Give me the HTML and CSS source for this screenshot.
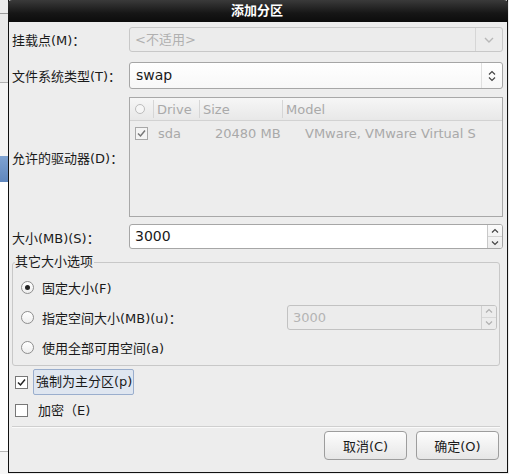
FILE: index.html
```html
<!DOCTYPE html>
<html lang="zh-CN">
<head>
<meta charset="utf-8">
<title>添加分区</title>
<link rel="stylesheet" href="styles.css">
</head>
<body>
<div class="screen">
  <div class="strip">
    <div class="strip-top"></div>
    <div class="strip-box"></div>
    <div class="strip-sel"></div>
    <div class="strip-fill"></div>
    <div class="strip-line"></div>
    <div class="strip-rest"></div>
  </div>
  <div class="dialog">
    <div class="titlebar">添加分区</div>
    <div class="body">
      <div class="form">
        <div class="lbl">挂载点(M)：</div>
        <div class="combo combo-disabled">
          <span class="combo-text">&lt;不适用&gt;</span>
          <span class="combo-btn">
            <svg width="12" height="8" viewBox="0 0 12 8"><path d="M2 2 L6 6 L10 2" fill="none" stroke="#b8b8b8" stroke-width="1.4"/></svg>
          </span>
        </div>

        <div class="lbl">文件系统类型(T)：</div>
        <div class="combo combo-type">
          <span class="combo-text">swap</span>
          <span class="combo-btn">
            <svg width="10" height="14" viewBox="0 0 10 14"><path d="M2 5.5 L5 2.5 L8 5.5 M2 8.5 L5 11.5 L8 8.5" fill="none" stroke="#444" stroke-width="1.2"/></svg>
          </span>
        </div>

        <div class="lbl lbl-center">允许的驱动器(D)：</div>
        <div class="tree">
          <div class="tree-head">
            <div class="th th-check"><span class="mini-radio"></span></div>
            <div class="th th-drive">Drive</div>
            <div class="th th-size">Size</div>
            <div class="th th-model">Model</div>
          </div>
          <div class="tree-row">
            <div class="td td-check">
              <span class="cb cb-dis"><svg width="11" height="11" viewBox="0 0 11 11"><path d="M2 5.5 L4.5 8 L9 2.5" fill="none" stroke="#777" stroke-width="1.5"/></svg></span>
            </div>
            <div class="td td-drive">sda</div>
            <div class="td td-size">20480 MB</div>
            <div class="td td-model">VMware, VMware Virtual S</div>
          </div>
        </div>

        <div class="lbl">大小(MB)(S)：</div>
        <div class="spin spin-size">
          <span class="spin-text">3000</span>
          <span class="spin-btns">
            <span class="spin-up"><svg width="8" height="6" viewBox="0 0 8 6"><path d="M1 4.5 L4 1.5 L7 4.5" fill="none" stroke="#444" stroke-width="1.2"/></svg></span>
            <span class="spin-down"><svg width="8" height="6" viewBox="0 0 8 6"><path d="M1 1.5 L4 4.5 L7 1.5" fill="none" stroke="#444" stroke-width="1.2"/></svg></span>
          </span>
        </div>
      </div>

      <fieldset class="frame">
        <legend>其它大小选项</legend>
        <div class="radio-row">
          <span class="radio radio-on"></span><span class="rlabel">固定大小(F)</span>
        </div>
        <div class="radio-row">
          <span class="radio"></span><span class="rlabel">指定空间大小(MB)(u)：</span>
          <div class="spin spin-disabled">
            <span class="spin-text">3000</span>
            <span class="spin-btns">
              <span class="spin-up"><svg width="8" height="6" viewBox="0 0 8 6"><path d="M1 4.5 L4 1.5 L7 4.5" fill="none" stroke="#b0b0b0" stroke-width="1.2"/></svg></span>
              <span class="spin-down"><svg width="8" height="6" viewBox="0 0 8 6"><path d="M1 1.5 L4 4.5 L7 1.5" fill="none" stroke="#b0b0b0" stroke-width="1.2"/></svg></span>
            </span>
          </div>
        </div>
        <div class="radio-row">
          <span class="radio"></span><span class="rlabel">使用全部可用空间(a)</span>
        </div>
      </fieldset>

      <div class="check-row">
        <span class="cb"><svg width="11" height="11" viewBox="0 0 11 11"><path d="M2 5.5 L4.5 8 L9 2.5" fill="none" stroke="#222" stroke-width="1.5"/></svg></span>
        <span class="clabel focus">強制为主分区(p)</span>
      </div>
      <div class="check-row check-row2">
        <span class="cb"></span>
        <span class="clabel">加密（E)</span>
      </div>

      <div class="sep"></div>

      <div class="buttons">
        <button class="btn">取消(C)</button>
        <button class="btn">确定(O)</button>
      </div>
    </div>
  </div>
</div>
</body>
</html>
```

FILE: styles.css
```css
* { box-sizing: border-box; }

html, body {
  margin: 0;
  padding: 0;
  width: 509px;
  height: 474px;
  overflow: hidden;
  background: #ececec;
  font-family: "DejaVu Sans", "Noto Sans CJK SC", sans-serif;
  font-size: 13px;
  color: #1a1a1a;
}

.screen {
  display: flex;
  width: 509px;
  height: 474px;
}

/* background window strip at the left */
.strip {
  width: 8px;
  flex: none;
  display: flex;
  flex-direction: column;
  background: #f4f4f4;
}
.strip-top { height: 14px; background: #ececec; border-bottom: 1px solid #9a9a9a; }
.strip-box { height: 69px; background: #e9e9e9; border-bottom: 1px solid #b0b0b0; }
.strip-sel { margin-top: 73px; height: 26px; background: linear-gradient(#7fa3d2, #5f86bd); }
.strip-fill { height: 269px; background: #ffffff; }
.strip-line { height: 1px; background: #b5b5b5; }
.strip-rest { flex: 1; background: #f6f6f6; }

.dialog {
  flex: none;
  width: 500px;
  height: 473px;
  display: flex;
  flex-direction: column;
  background: #ededed;
  border-left: 1px solid #111;
  border-right: 1px solid #111;
  border-bottom: 1px solid #111;
}

.titlebar {
  height: 22px;
  flex: none;
  background: linear-gradient(#3a3a3a, #161616 60%, #0c0c0c);
  color: #fff;
  font-weight: bold;
  text-align: center;
  line-height: 22px;
  font-size: 13px;
  border-radius: 4px 4px 0 0;
  margin-left: -1px;
  margin-right: -1px;
  padding-right: 2px;
}

.body {
  flex: 1;
  display: flex;
  flex-direction: column;
  padding: 5px 4px 0 3px;
}

.form {
  display: grid;
  grid-template-columns: 117px 1fr;
  row-gap: 9px;
  align-items: center;
}

.lbl {
  white-space: nowrap;
  color: #1a1a1a;
}

.combo {
  height: 25px;
  display: flex;
  align-items: stretch;
  border: 1px solid #b9b9b9;
  border-radius: 3px;
}
.combo-text {
  flex: 1;
  padding-left: 5px;
  line-height: 23px;
}
.combo-btn {
  width: 27px;
  display: flex;
  align-items: center;
  justify-content: center;
  border-left: 1px solid #d0d0d0;
}
.combo-disabled {
  background: #ececec;
  border-color: #c8c8c8;
  color: #b0b0b0;
}
.combo-disabled .combo-btn { border-left-color: #d6d6d6; width: 27px; }
.combo-type {
  height: 27px;
  background: linear-gradient(#ffffff, #f7f7f7);
  border-color: #a6a6a6;
  font-size: 14px;
  margin-top: 1px;
}
.combo-type .combo-text { line-height: 25px; padding-left: 6px; }
.combo-type .combo-btn { width: 21px; border-left-color: #e0e0e0; }

.tree {
  height: 120px;
  border: 1px solid #a8a8a8;
  background: #ededed;
  color: #a9a9a9;
  margin-top: -1px;
}
.tree-head {
  display: flex;
  height: 23px;
  background: linear-gradient(#f6f6f6, #e8e8e8);
  border-bottom: 1px solid #d2d2d2;
}
.th {
  display: flex;
  align-items: center;
  padding-left: 3px;
  border-right: 1px solid #d6d6d6;
  margin: 2px 0;
}
.th-check { width: 24px; padding-left: 5px; }
.th-drive { width: 46px; }
.th-size { width: 83px; }
.th-model { flex: 1; border-right: none; }
.mini-radio {
  width: 10px;
  height: 10px;
  border: 1px solid #bcbcbc;
  border-radius: 50%;
  background: #f6f6f6;
}
.tree-row {
  display: flex;
  height: 22px;
  align-items: center;
  margin-top: 1px;
}
.td-check { width: 28px; padding-left: 5px; display: flex; }
.td-drive { width: 57px; }
.td-size { width: 90px; }
.td-model { flex: 1; white-space: nowrap; }

.spin {
  height: 25px;
  display: flex;
  background: #fff;
  border: 1px solid #a6a6a6;
  border-radius: 3px;
  font-size: 14px;
}
.spin-size { margin-top: -2px; }
.spin-text {
  flex: 1;
  padding-left: 5px;
  line-height: 23px;
}
.spin-btns {
  width: 15px;
  display: flex;
  flex-direction: column;
  border-left: 1px solid #c8c8c8;
  background: linear-gradient(#fbfbfb, #ececec);
  border-radius: 0 2px 2px 0;
}
.spin-up, .spin-down {
  flex: 1;
  display: flex;
  align-items: center;
  justify-content: center;
}
.spin-up { border-bottom: 1px solid #d2d2d2; }

.frame {
  margin: 6px 3px 0 0;
  padding: 3px 0 3px 8px;
  border: 1px solid #c8c8c8;
  border-radius: 3px;
  min-width: 0;
}
.frame legend {
  padding: 0 1px 0 0;
  margin-left: -6px;
  line-height: 14px;
}
.radio-row {
  display: flex;
  align-items: center;
  height: 30px;
}
.radio {
  width: 13px;
  height: 13px;
  border: 1px solid #8e8e8e;
  border-radius: 50%;
  background: linear-gradient(#ffffff, #eeeeee);
  flex: none;
  display: flex;
  align-items: center;
  justify-content: center;
}
.radio-on::after {
  content: "";
  width: 5px;
  height: 5px;
  border-radius: 50%;
  background: #222;
}
.rlabel {
  margin-left: 8px;
  white-space: nowrap;
}
.spin-disabled {
  margin-left: auto;
  margin-right: 2px;
  width: 210px;
  background: #ececec;
  border-color: #c2c2c2;
  color: #b4b4b4;
  font-size: 13px;
}
.spin-disabled .spin-btns { background: #ececec; border-left-color: #d0d0d0; }
.spin-disabled .spin-up { border-bottom-color: #d8d8d8; }

.check-row {
  display: flex;
  align-items: center;
  height: 26px;
  margin-top: 3px;
  padding-left: 3px;
}
.check-row2 { margin-top: 2px; }
.cb {
  width: 13px;
  height: 13px;
  border: 1px solid #777;
  background: #fff;
  display: flex;
  align-items: center;
  justify-content: center;
  flex: none;
}
.cb-dis {
  border-color: #a8a8a8;
  background: #f4f4f4;
}
.clabel {
  margin-left: 7px;
  padding: 0 2px;
  line-height: 23px;
  white-space: nowrap;
  border: 1px solid transparent;
}
.clabel.focus {
  background: #dfe6f0;
  border: 1px solid #9aaecd;
  border-radius: 2px;
  padding: 0 1px 1px 2px;
  margin-left: 5px;
  line-height: 23px;
}

.sep {
  margin: 3px 3px 0 0;
  height: 2px;
  border-top: 1px solid #cfcfcf;
  border-bottom: 1px solid #fafafa;
}

.buttons {
  display: flex;
  justify-content: flex-end;
  gap: 9px;
  margin-top: 3px;
  padding-right: 4px;
}
.btn {
  width: 83px;
  height: 29px;
  font-family: inherit;
  font-size: 13px;
  color: #1a1a1a;
  background: linear-gradient(#fdfdfd, #e6e6e6);
  border: 1px solid #9d9d9d;
  border-radius: 4px;
  padding: 0;
}
```
